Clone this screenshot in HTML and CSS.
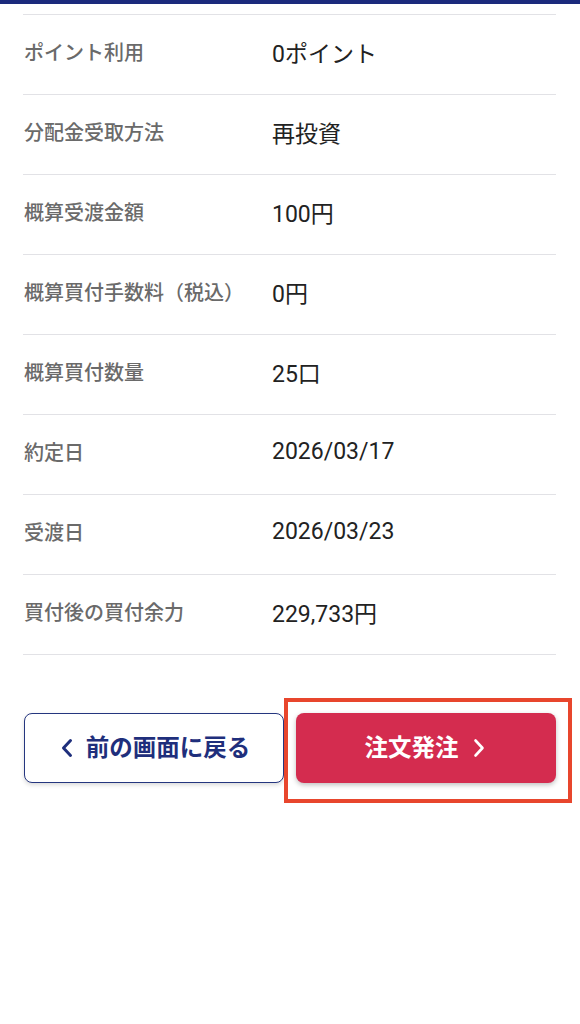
FILE: index.html
```html
<!DOCTYPE html>
<html lang="ja">
<head>
    <meta charset="UTF-8">
    <meta name="viewport" content="width=device-width, initial-scale=1.0">
    <title>注文確認</title>
    <link rel="stylesheet" href="styles.css">
</head>
<body>
    <div class="top-bar"></div>

    <section class="container">
        <dl class="detail-list">
            <div class="detail-row">
                <dt>ポイント利用</dt>
                <dd>0ポイント</dd>
            </div>
            <div class="detail-row">
                <dt>分配金受取方法</dt>
                <dd>再投資</dd>
            </div>
            <div class="detail-row">
                <dt>概算受渡金額</dt>
                <dd>100円</dd>
            </div>
            <div class="detail-row">
                <dt>概算買付手数料（税込）</dt>
                <dd>0円</dd>
            </div>
            <div class="detail-row">
                <dt>概算買付数量</dt>
                <dd>25口</dd>
            </div>
            <div class="detail-row">
                <dt>約定日</dt>
                <dd>2026/03/17</dd>
            </div>
            <div class="detail-row">
                <dt>受渡日</dt>
                <dd>2026/03/23</dd>
            </div>
            <div class="detail-row">
                <dt>買付後の買付余力</dt>
                <dd>229,733円</dd>
            </div>
        </dl>

        <div class="actions">
            <button class="btn back-btn" type="button">
                <svg class="chev" width="12" height="20" viewBox="0 0 12 20"><path d="M9.5 2.5 L2.5 10 L9.5 17.5" fill="none" stroke="currentColor" stroke-width="3" stroke-linecap="round" stroke-linejoin="round"/></svg>
                <span>前の画面に戻る</span>
            </button>
            <div class="submit-wrap">
                <button class="btn submit-btn" type="button">
                    <span>注文発注</span>
                    <svg class="chev" width="12" height="20" viewBox="0 0 12 20"><path d="M2.5 2.5 L9.5 10 L2.5 17.5" fill="none" stroke="currentColor" stroke-width="2.6" stroke-linecap="round" stroke-linejoin="round"/></svg>
                </button>
                <div class="highlight"></div>
            </div>
        </div>
    </section>
</body>
</html>
```

FILE: styles.css
```css
body {
    margin: 0;
    padding: 0;
    background: #ffffff;
    font-family: Roboto, "Noto Sans CJK JP", sans-serif;
    color: #222;
}
.top-bar {
    height: 4px;
    background: #1b2a7c;
}
.container {
    padding: 10px 24px 120px 23px;
}
.detail-list {
    margin: 0;
    border-top: 1px solid #e2e2e6;
}
.detail-row {
    display: flex;
    align-items: center;
    box-sizing: border-box;
    height: 80px;
    padding-bottom: 6px;
    border-bottom: 1px solid #e2e2e6;
}
.detail-row dt {
    width: 248px;
    padding-left: 1px;
    font-family: "Noto Sans CJK JP", sans-serif;
    font-size: 20px;
    font-weight: 500;
    color: #6a6a6a;
}
.detail-row dd {
    margin: 0;
    font-size: 23px;
    color: #222;
}
.actions {
    display: flex;
    gap: 12px;
    margin-top: 58px;
    padding-left: 1px;
}
.btn {
    display: flex;
    align-items: center;
    justify-content: center;
    box-sizing: border-box;
    width: 260px;
    height: 70px;
    border-radius: 8px;
    font-family: "Noto Sans CJK JP", sans-serif;
    font-size: 23.5px;
    font-weight: bold;
    cursor: pointer;
    padding: 0 0 5px 0;
}
.back-btn {
    gap: 13px;
    padding-left: 3px;
    background: #ffffff;
    color: #1f2f7c;
    border: 1.5px solid #25367f;
    box-shadow: 0 2px 4px rgba(0, 0, 0, 0.15);
}
.back-btn .chev,
.submit-btn .chev {
    margin-top: 4px;
}
.submit-wrap {
    position: relative;
}
.submit-btn {
    gap: 14px;
    padding-right: 3px;
    background: #d42c4f;
    color: #ffffff;
    border: none;
    box-shadow: 0 2px 5px rgba(0, 0, 0, 0.25);
}
.highlight {
    position: absolute;
    left: -12px;
    top: -15px;
    right: -16px;
    bottom: -20px;
    border: 4px solid #e8462d;
}
```
